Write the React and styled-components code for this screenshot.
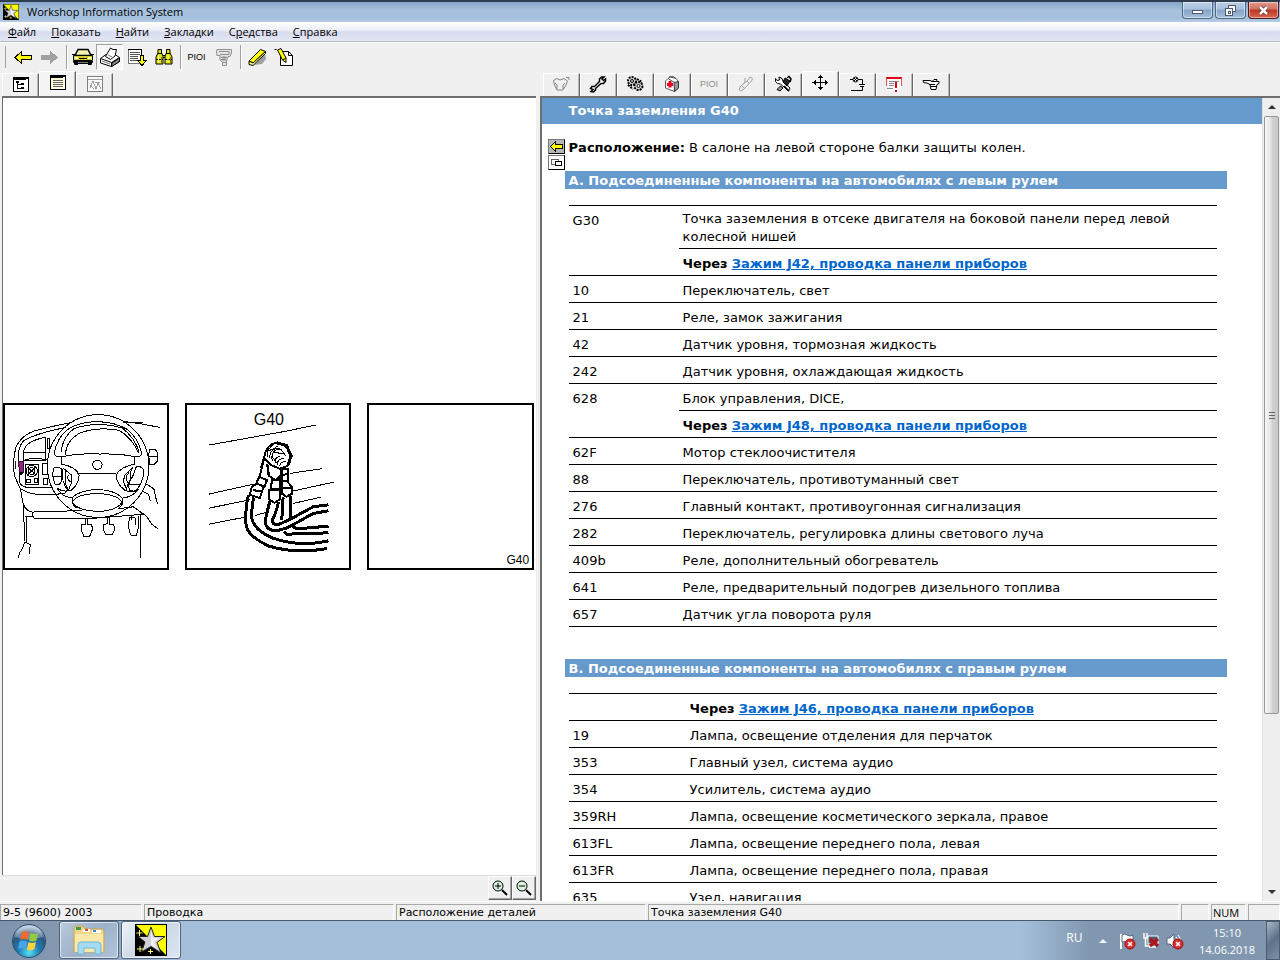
import React from "react";
import styled, { createGlobalStyle, css } from "styled-components";

const GlobalStyle = createGlobalStyle`
  * {
    box-sizing: border-box;
  }
  body {
    margin: 0;
    background: #f0f0f0;
    color: #000;
    font-family: "Open Sans", "Noto Sans", sans-serif;
    font-size: 12px;
  }
  button {
    font: inherit;
    color: inherit;
    padding: 0;
    margin: 0;
    border: 0;
    background: none;
  }
  svg {
    display: block;
  }
`;

const Desktop = styled.div`
  height: 100vh;
  display: flex;
  flex-direction: column;
  overflow: hidden;
`;

/* ---------- title bar ---------- */

const TitleBar = styled.header`
  height: 22px;
  flex: none;
  display: flex;
  align-items: center;
  padding: 0 1px 0 3px;
  border-top: 2px solid #2e3d50;
  background: linear-gradient(#88a6ca, #a9c2de 45%, #a4bfdd 80%, #b7cde6);
`;

const Title = styled.h1`
  flex: 1;
  margin: 0 0 0 8px;
  font-size: 11px;
  line-height: 18px;
  font-weight: 400;
`;

const WindowButtons = styled.div`
  display: flex;
  gap: 2px;
  align-self: flex-start;
`;

const WindowButton = styled.button`
  width: 31px;
  height: 17px;
  display: flex;
  align-items: center;
  justify-content: center;
  border: 1px solid ${(props) => (props.$danger ? "#4b1a1c" : "#4f6886")};
  border-top: 0;
  border-radius: 0 0 4px 4px;
  box-shadow: inset 0 0 0 1px rgba(255, 255, 255, 0.45);
  background: ${(props) =>
    props.$danger
      ? "linear-gradient(#e29a8c, #d2705f 45%, #bb3423 50%, #d8694f)"
      : "linear-gradient(#bccfe5, #a8c0dc 45%, #86a3c5 50%, #a5bfdc)"};
`;

/* ---------- menu + toolbar ---------- */

const MenuBar = styled.nav`
  height: 20px;
  flex: none;
  display: flex;
  align-items: center;
  gap: 15px;
  padding: 0 8px;
  background: linear-gradient(#fff, #eef0f8 40%, #d8dcee 55%, #e4e6f4);
  border-bottom: 1px solid #b4b6c2;
`;

const MenuItem = styled.button`
  font-size: 11px;
  line-height: 18px;
`;

const Toolbar = styled.div`
  height: 29px;
  flex: none;
  display: flex;
  align-items: center;
  padding-left: 4px;
  border-top: 1px solid #fff;
`;

const Grip = styled.span`
  width: 2px;
  height: 22px;
  margin-right: 3px;
  border-right: 1px solid #a0a0a0;
`;

const Divider = styled.span`
  width: 6px;
  height: 24px;
  flex: none;
  background: linear-gradient(90deg, transparent 3px, #a0a0a0 3px, #a0a0a0 4px, #fff 4px, #fff 5px, transparent 5px);
`;

const ToolButton = styled.button`
  width: 27px;
  height: 26px;
  display: flex;
  align-items: center;
  justify-content: center;
  border: 1px solid transparent;
  ${(props) =>
    props.$pressed &&
    css`
      border-color: #a0a0a0 #fff #fff #a0a0a0;
      background: #f7f7f7;
    `}
`;

const Code = styled.span`
  font-family: "Liberation Sans", sans-serif;
  font-size: 9px;
  line-height: 12px;
  color: ${(props) => (props.$off ? "#8c8c8c" : "#000")};
`;

/* ---------- panes ---------- */

const Workspace = styled.main`
  flex: 1;
  min-height: 0;
  display: flex;
`;

const Pane = styled.section`
  display: flex;
  flex-direction: column;
  min-width: 0;
  width: ${(props) => props.$width || "auto"};
  flex: ${(props) => (props.$width ? "none" : "1")};
  padding: ${(props) => (props.$width ? "0 2px" : "0 0 0 2px")};
`;

const Tabs = styled.div`
  height: 25px;
  flex: none;
  display: flex;
  align-items: flex-end;
  padding-left: ${(props) => props.$indent || 0}px;
`;

const Tab = styled.button`
  width: 37px;
  height: ${(props) => (props.$active ? 25 : 23)}px;
  padding-bottom: ${(props) => (props.$active ? 4 : 2)}px;
  display: flex;
  align-items: center;
  justify-content: center;
  background: ${(props) => (props.$active ? "#f4f4f4" : "#f0f0f0")};
  border-top: 1px solid #fff;
  border-left: 1px solid #fff;
  border-right: 1px solid #696969;
  box-shadow: inset -1px 0 #b8b8b8;
`;

const Panel = styled.div`
  flex: 1;
  min-height: 0;
  display: flex;
  background: #fff;
  border-top: 2px solid #6e6e6e;
  border-left: ${(props) => (props.$split ? 2 : 1)}px solid #6e6e6e;
`;

const Pictures = styled.div`
  flex: 1;
  display: grid;
  grid-template-columns: repeat(3, 1fr);
  gap: 16px;
  align-content: center;
  padding-right: 2px;
`;

const Picture = styled.figure`
  margin: 0;
  aspect-ratio: 1;
  border: 2px solid #000;
  background: #fff;
  svg {
    width: 100%;
    height: 100%;
  }
`;

const PaneFooter = styled.div`
  height: 26px;
  flex: none;
  display: flex;
  justify-content: flex-end;
  border-top: 1px solid #dcdcdc;
`;

const ZoomButton = styled.button`
  width: 24px;
  height: 24px;
  display: flex;
  align-items: center;
  justify-content: center;
  border: 1px solid #fff;
  border-right-color: #696969;
  border-bottom-color: #696969;
  box-shadow: inset -1px -1px #a0a0a0;
`;

/* ---------- document ---------- */

const Document = styled.article`
  flex: 1;
  overflow: hidden;
  font-family: "DejaVu Sans", Verdana, sans-serif;
  font-size: 13px;
  line-height: 18px;
`;

const DocTitle = styled.h2`
  margin: 0;
  padding: 4px 27px;
  font-size: 13px;
  line-height: 18px;
  color: #fff;
  background: #6699cc;
`;

const Location = styled.div`
  display: flex;
  gap: 4px;
  padding: 15px 6px 0;
  margin-bottom: 1px;
  p {
    margin: 0;
  }
`;

const SideButtons = styled.div`
  display: flex;
  flex-direction: column;
  gap: 1px;
`;

const SideButton = styled.button`
  width: 17px;
  height: 15px;
  background: ${(props) => (props.$filled ? "#b8b8b8" : "#fff")};
  border: 1px solid #000;
  border-left-color: #777;
  border-top-color: #777;
`;

const Section = styled.section`
  margin: 0 35px 32px 23px;
`;

const SectionTitle = styled.h3`
  margin: 0 0 16px;
  padding: 1px 4px 0;
  font-size: 13px;
  line-height: 17px;
  color: #fff;
  background: #6699cc;
`;

const PartsTable = styled.table`
  width: calc(100% - 14px);
  margin-left: 4px;
  border-collapse: separate;
  border-spacing: 0;
  border-bottom: ${(props) => (props.$open ? "0" : "1px solid #000")};
  th,
  td {
    padding: 6px 4px 2px;
    border-top: 1px solid #000;
    font-weight: 400;
    text-align: left;
    vertical-align: top;
  }
  th {
    width: ${(props) => props.$codeWidth}px;
  }
`;

const TallCell = styled.td`
  && {
    padding-top: 4px;
    padding-bottom: 2px;
  }
`;

const DocLink = styled.a`
  color: #0066cc;
  font-weight: 700;
  text-decoration: underline;
`;

const Scrollbar = styled.div`
  width: 18px;
  flex: none;
  display: flex;
  flex-direction: column;
  background: #eeeeee;
  border-left: 1px solid #e4e4e4;
`;

const ScrollArrow = styled.button`
  height: 18px;
  display: flex;
  align-items: center;
  justify-content: center;
`;

const ScrollTrack = styled.div`
  flex: 1;
`;

const Thumb = styled.div`
  height: 78%;
  margin: 0 1px;
  display: flex;
  align-items: center;
  justify-content: center;
  border: 1px solid #979797;
  border-radius: 2px;
  background: linear-gradient(90deg, #f6f6f6, #e4e4e4 45%, #d0d0d0 55%, #c8c8c8);
`;

/* ---------- status bar + taskbar ---------- */

const StatusBar = styled.footer`
  height: 19px;
  flex: none;
  display: grid;
  grid-template-columns: 142px 250px 250px 1fr 28px 35px 32px;
  gap: 2px;
  padding: 2px 0 1px;
  font-family: "DejaVu Sans", Tahoma, sans-serif;
  font-size: 11px;
  border-top: 1px solid #fff;
`;

const StatusCell = styled.span`
  padding-left: 2px;
  border: 1px solid #a8a8a8;
  border-right-color: #fff;
  border-bottom-color: #fff;
  white-space: nowrap;
  line-height: 15px;
`;

const Numlock = styled(StatusCell)`
  padding-left: 1px;
  font-family: "Open Sans", sans-serif;
`;

const Taskbar = styled.div`
  height: 40px;
  flex: none;
  display: flex;
  align-items: stretch;
  border-top: 1px solid #46586e;
  background: linear-gradient(90deg, #8093ac, #8598b0 60px, #a5bfdb 180px, #a5bfdb calc(100% - 260px), #8197b0 calc(100% - 190px));
`;

const StartButton = styled.button`
  width: 57px;
  display: flex;
  align-items: center;
  justify-content: center;
`;

const TaskButton = styled.button`
  width: 60px;
  margin: 0 0 1px 2px;
  display: flex;
  align-items: center;
  justify-content: center;
  border: 1px solid #4f637c;
  border-radius: 3px;
  box-shadow: inset 0 0 0 1px rgba(255, 255, 255, 0.6);
  background: ${(props) =>
    props.$active
      ? "linear-gradient(135deg, #eef2f8, #cbd7e6 50%, #dce6f1)"
      : "linear-gradient(135deg, #bccadb, #9db1ca 50%, #b0c4da)"};
`;

const Tray = styled.div`
  margin-left: auto;
  display: flex;
  align-items: center;
  color: #fff;
`;

const Language = styled.button`
  width: 17px;
  margin: 0 8px 5px 0;
  font-size: 12px;
  line-height: 16px;
`;

const TrayButton = styled.button`
  width: 24px;
  height: 24px;
  display: flex;
  align-items: center;
  justify-content: center;
`;

const Clock = styled.time`
  margin: 1px 11px 0 12px;
  text-align: center;
  font-size: 11px;
  line-height: 17px;
`;

const ShowDesktop = styled.button`
  width: 14px;
  align-self: stretch;
  border: 1px solid #4a5b70;
  background: linear-gradient(135deg, #a9b7c9, #5f7189 50%, #7d90a8);
`;

/* ---------- icons ---------- */

function Icon({ size = 24, children, smooth }) {
  return (
    <svg
      width={size}
      height={size}
      viewBox={`0 0 ${size} ${size}`}
      fill="none"
      stroke="#000"
      shapeRendering={smooth ? "auto" : "crispEdges"}
      aria-hidden="true"
    >
      {children}
    </svg>
  );
}

const StarLogo = ({ size }) => (
  <svg width={size} height={size} viewBox="0 0 32 32" aria-hidden="true">
    <path d="M0 0H32V32H0Z" fill="#000" />
    <path d="M1 1H31V31Z" fill="#ffff00" />
    <path
      d="M16 3L19.500 12.500H30L22 18.500L26 29L16 22.500L6.500 28L10 18L3 12.500H12.500Z"
      fill="#d0d0d6"
      stroke="#222"
    />
    <path d="M16 6L18 14H25L19 18L22 25L16 21Z" fill="#f2f2f6" />
    <path d="M4.500 6V12M1.500 9H7.500M5 22V28M2 25H8M15.500 25V30M13 27.500H18" stroke="#ffff66" fill="none" />
  </svg>
);

const BackIcon = () => (
  <Icon>
    <path d="M4 12.500L10.500 6.500V10.500H20.500V14.500H10.500V18.500Z" fill="#ffff00" />
  </Icon>
);

const ForwardIcon = () => (
  <Icon>
    <path d="M3 10H12V5.500L20 12.500L12 19V15H3Z" fill="#a0a0a0" stroke="none" />
  </Icon>
);

const CarIcon = () => (
  <Icon smooth>
    <path d="M7 4.500H17L20 10.500H4Z" fill="#f4f0b0" strokeWidth="1.500" />
    <path d="M2.500 10.500H21.500V15.500H2.500Z" fill="#d2ca30" />
    <path d="M2 16H22V17.500H2ZM2.500 17H7V20H3.500ZM17 17H21.500L20.500 20H17Z" fill="#000" stroke="none" />
    <path d="M1 9.500H4M20 9.500H23M7 18.500H17M8 13.500H16" />
    <path d="M3.500 12H7V14H3.500ZM17 12H20.500V14H17Z" fill="#ffffc0" stroke="none" />
  </Icon>
);

const PrinterIcon = () => (
  <Icon smooth>
    <path d="M2.500 13.500L8 9.500H17L21.500 12.500V16.500L13.500 21.500L2.500 18Z" fill="#fff" />
    <path d="M14 18L21.500 13V16.500L13.500 21.500Z" fill="#888" />
    <path d="M7.500 11.500L12.500 3L15 4.500L18.500 4.500L17 11L12.500 14.500Z" fill="#fff" />
    <path d="M2.500 13.500L13.500 17.500L21.500 12.500M13.500 17.500V21" />
    <path d="M4 16L12 19M10 10L14 12" stroke="#777" />
  </Icon>
);

const ListDownIcon = () => (
  <Icon>
    <path d="M3.500 4.500H16.500V18.500H3.500Z" fill="#fff" stroke="#777" />
    <path d="M5 7.500H15M5 9.500H15M5 11.500H13M5 13.500H13M5 15.500H12" stroke="#555" />
    <path d="M3 4.500H17M16.500 4V10" />
    <path d="M15.500 10.500H18.500V15.500H21.500L17 20.500L12.500 15.500H15.500Z" fill="#ffff00" />
  </Icon>
);

const BinocularsIcon = () => (
  <Icon smooth>
    <path d="M6 4.500H9.500V8L11 11V19H4V12L6 8Z" fill="#e6e200" />
    <path d="M14.500 4.500H18V8L20 12V19H13V11L14.500 8Z" fill="#e6e200" />
    <path d="M11 10.500H13M11 12.500H13M4 14.500H11M13 14.500H20M6 8.500H10M14 8.500H18" />
    <path d="M6.500 10V18M16 10V18" stroke="#ffffa0" />
    <path d="M9.500 12V18M18.500 12V18" stroke="#808000" />
  </Icon>
);

const ConnectorIcon = () => (
  <Icon smooth>
    <path
      d="M5 4.500H19.500V8L18 11.500H16L14.500 16V20.500H10.500V17L8 15V10.500H5L4.500 7Z"
      stroke="#909090"
      fill="#e4e4e4"
    />
    <path d="M7 6.500H17V9.500H8M9 12.500H15M9 14.500H14M11 17.500H14M11 11V16M13 11V16" stroke="#909090" />
  </Icon>
);

const MarkerIcon = () => (
  <Icon smooth>
    <path d="M9 20L20 8L21 14L17 19Z" fill="#a0a0a0" stroke="none" />
    <path d="M4 16L15.500 4.500L20.500 6.500L8 18Z" fill="#ffff00" />
    <path d="M4 16V19.500L8 20.500L20.500 8.500V6.500L8 18Z" fill="#ffff80" />
  </Icon>
);

const NoteIcon = () => (
  <Icon smooth>
    <path d="M8.500 6.500H16.500L20.500 10.500V20.500H8.500Z" fill="#fff" />
    <path d="M16.500 6.500V10.500H20.500" />
    <path d="M5.500 5L9 3.500L14 13V17.500L10.500 15Z" fill="#ffff00" />
    <path d="M2.500 4.500H4.500M10.500 15L14 13" />
  </Icon>
);

const TreeIcon = () => (
  <Icon>
    <path d="M4.500 5.500H19.500V19.500H4.500Z" fill="#fff" />
    <path d="M4 6.500H20M4 7.500H17M8.500 10V16.500H12M8.500 12.500H12" />
    <path d="M7 9H10V11H7ZM12 11H15V13H12ZM12 15H15V17H12Z" fill="#000" stroke="none" />
  </Icon>
);

const TextPageIcon = () => (
  <Icon>
    <path d="M4.500 5.500H19.500V19.500H4.500Z" fill="#ffffe0" />
    <path d="M4 6.500H20" />
    <path d="M4 7.500H17" />
    <path d="M7 10.500H17M7 12.500H17M7 14.500H17M7 16.500H17" stroke="#666" />
  </Icon>
);

const SketchIcon = () => (
  <Icon>
    <path d="M4.500 4.500H19.500V19.500H4.500Z" fill="#f8f8f8" stroke="#808080" />
    <path d="M5 7.500H19M7 16L10 9L13 17L15 11L18 17M7 13L11 17M12 10H17" stroke="#a0a0a0" />
  </Icon>
);

const EngineIcon = () => (
  <Icon smooth>
    <path
      d="M4.500 8.500L8 6.500L11 8L15 6.500L18.500 9L17 13L14 18H8L5.500 13ZM6 11L8 13V17M16 11L14 13V17M17 5.500H20V8"
      stroke="#858585"
    />
  </Icon>
);

const WrenchIcon = () => (
  <Icon smooth>
    <path
      d="M4.500 16.500L6 14.500H8.500L13.500 9.500V7L15.500 5H18L16 7L17.500 8.500L19.500 7V9L17.500 11.500H15L9.500 16.500V18L7.500 20L5 19.500L7 17.500Z"
      fill="#fff"
      strokeWidth="1.500"
    />
  </Icon>
);

const GearsIcon = () => (
  <Icon smooth>
    <circle cx="9" cy="9" r="4" fill="#ddd" strokeWidth="2" strokeDasharray="2 1" />
    <circle cx="9" cy="9" r="1.500" />
    <circle cx="15.500" cy="14" r="4" fill="#ddd" strokeWidth="2" strokeDasharray="2 1" />
    <circle cx="15.500" cy="14" r="1.500" fill="#fff" />
    <path d="M5 13L10 17M14 7L19 10" strokeDasharray="2 1" strokeWidth="2" />
  </Icon>
);

const FirstAidIcon = () => (
  <Icon smooth>
    <path d="M5.500 9L8 6.500L10 5L16 6.500L18.500 9.500V16L14.500 19.500L5.500 16Z" fill="#fff" stroke="#555" />
    <path d="M14 10.500L18.500 9.500V16L14.500 19.500Z" fill="#999" stroke="#333" />
    <path d="M8 6.500L14.500 10.500M9 5L13 4.500L16 6.500" stroke="#555" />
    <path d="M10 9V15.500M7 12.500H13" stroke="#e8001c" strokeWidth="3" />
  </Icon>
);

const ProbeIcon = () => (
  <Icon smooth>
    <path
      d="M6 15L14 8L16 5L18.500 6.500L17.500 9L10 17L7 19L5.500 18ZM8 14L10 16M13 9L15 11M11 6V10L9 12"
      stroke="#a0a0a0"
    />
  </Icon>
);

const ToolsIcon = () => (
  <Icon smooth>
    <path d="M4.500 6.500L6 8.500L8.500 8L8 5L11 6.500L12 9.500L19 16L17.500 19L9.500 12L6.500 11.500L4.500 9.500Z" fill="#fff" />
    <path d="M6 17.500L9.500 14L12 16L9 19Z" fill="#999" />
    <path d="M14 6L19 9L16 14L12 10Z" fill="#222" />
    <path d="M16 6L18 4.500L20 7L19 10M13 14L18 19" strokeWidth="1.500" />
  </Icon>
);

const MoveIcon = () => (
  <Icon>
    <path d="M12.500 5V20M5 12.500H20" />
    <path d="M12.500 4.500L10 8H15ZM12.500 20.500L10 17H15ZM4.500 12.500L8 10V15ZM20.500 12.500L17 10V15Z" fill="#000" stroke="none" />
  </Icon>
);

const CircuitIcon = () => (
  <Icon smooth>
    <circle cx="10.500" cy="7.500" r="2.500" />
    <path d="M5 7.500H8M13 7.500H17.500V12M14 12.500H20M15 14.500H19M17.500 15V18.500H6M9 6L12 9M12 6L9 9" />
  </Icon>
);

const AlertIcon = () => (
  <Icon>
    <path d="M5.500 6.500H19.500V14.500L17 18.500H7L5.500 14.500Z" fill="#fff" stroke="none" />
    <path d="M4 6H20" stroke="#e00018" strokeWidth="2" />
    <path d="M4.500 6V14M19.500 6V14" stroke="#e05060" />
    <path d="M7 9.500H17M7 11.500H12M7 13.500H12M5 16.500H11" stroke="#888" />
    <path d="M14 10V16M14 18V20" stroke="#e00018" strokeWidth="2" />
  </Icon>
);

const HandIcon = () => (
  <Icon smooth>
    <path d="M4 8.500H11L13 9.500L15 7.500H18L17.500 9.500H20V11.500L18 12.500L17 17.500H12L11 12.500L8 11L4.500 10.500Z" fill="#fff" />
    <path d="M11 12.500H16M12 14.500H17M13 9.500H17.500" />
  </Icon>
);

const ZoomIcon = ({ plus }) => (
  <Icon size={20} smooth>
    <circle cx="8" cy="8" r="5" fill="#d8f5dc" />
    <path d="M12 12L17 17" strokeWidth="2" />
    <path d={plus ? "M5 8H11M8 5V11" : "M5 8H11"} />
  </Icon>
);

const Triangle = ({ up, light }) => (
  <svg width="8" height="6" viewBox="0 0 8 6" aria-hidden="true">
    <path d={up ? "M4 1L8 5H0Z" : "M4 5L8 1H0Z"} fill={light ? "#f2f6fa" : "#333"} />
  </svg>
);

const StartOrb = () => (
  <svg width="36" height="36" viewBox="0 0 36 36" aria-hidden="true">
    <defs>
      <radialGradient id="orb" cx="50%" cy="85%" r="80%">
        <stop offset="0" stopColor="#58e0f5" />
        <stop offset="0.400" stopColor="#1f7db4" />
        <stop offset="0.750" stopColor="#2c5680" />
        <stop offset="1" stopColor="#b7cbdc" />
      </radialGradient>
    </defs>
    <circle cx="18" cy="18" r="16.500" fill="url(#orb)" stroke="#314f6d" />
    <path d="M4 14Q7 3 18 3Q29 3 32 14Q18 18 4 14Z" fill="#fff" opacity="0.300" />
    <path d="M11 9Q14 7.500 18 9.500L16.500 17Q13 15 9 17Z" fill="#ee6a2f" />
    <path d="M19.500 10Q23 12 27 10L25.500 17.500Q22 19.500 18 17.500Z" fill="#97c93d" />
    <path d="M8.500 18.500Q12 16.500 16 18.500L14.500 26Q11 24 7 26Z" fill="#4aa3e8" />
    <path d="M17.500 19Q21 21 25 19L23.500 26Q20 28.500 16 26.500Z" fill="#ffd13a" />
  </svg>
);

const FolderIcon = () => (
  <svg width="34" height="32" viewBox="0 0 34 32" aria-hidden="true">
    <path d="M2 5Q2 2 5 2H11L13 5H30Q32 5 32 8V28H2Z" fill="#f0d68a" stroke="#c9a54e" />
    <path d="M4 3H9V6H4Z" fill="#3d9e4a" />
    <path d="M11 5H18V8H11Z" fill="#fff" />
    <path d="M13 5H16V7H13Z" fill="#d64b32" />
    <path d="M20 6H29V9H20Z" fill="#fff" />
    <path d="M21 6H24V8H21Z" fill="#3f8fd2" />
    <path d="M3 10H31V28H3Z" fill="#fbe9ac" />
    <path d="M6 30V21Q6 18 9 18H26Q29 18 29 21V30H23V24H12V30Z" fill="#a5daf3" stroke="#6fb6da" />
  </svg>
);

const Cross = () => (
  <>
    <circle cx="13" cy="13" r="5" fill="#d92b2b" stroke="#a01414" />
    <path d="M11 11L15 15M15 11L11 15" stroke="#fff" strokeWidth="1.500" />
  </>
);

const FlagIcon = () => (
  <Icon size={20} smooth>
    <path d="M4 3V18" stroke="#fff" strokeWidth="2" />
    <path d="M5 4Q8 2 10 4Q13 6 16 4V11Q12 13 10 11Q8 10 5 11Z" fill="#fff" stroke="#56677c" />
    <Cross />
  </Icon>
);

const NetworkIcon = () => (
  <Icon size={20} smooth>
    <path d="M7 5H17V13H7Z" fill="#4b5a6b" stroke="#fff" />
    <path d="M3 2V7H6V2M4.500 7V15H9M8 16H15" stroke="#fff" strokeWidth="1.500" />
    <path d="M9 8L17 15M17 8L9 15" stroke="#b31217" strokeWidth="3" />
  </Icon>
);

const SpeakerIcon = () => (
  <Icon size={20} smooth>
    <path d="M2 7H5L9 3V17L5 13H2Z" fill="#fff" stroke="#56677c" />
    <path d="M11 6Q13 8 12 10M13 4Q16 7 15 10" stroke="#fff" />
    <Cross />
  </Icon>
);

/* ---------- drawings ---------- */

const DashboardDrawing = () => (
  <svg viewBox="16 31 486 486" fill="none" stroke="#000" strokeWidth="3" shapeRendering="crispEdges" role="img" aria-label="G40">
    <ellipse cx="295" cy="214" rx="152" ry="154" />
    <path d="M163 178Q172 126 207 102Q245 80 296 81Q345 82 384 105Q415 130 426 178" />
    <path d="M163 178Q170 188 184 186Q240 174 300 178Q360 176 406 186Q420 188 426 178" />
    <path d="M184 172Q188 128 222 102Q290 78 368 100Q405 130 418 172" />
    <path d="M198 180Q196 142 240 115Q295 95 358 107Q398 130 416 176" />
    <circle cx="293" cy="210" r="14" />
    <path d="M184 186V208Q230 216 238 242Q236 270 215 286Q190 294 172 280" />
    <path d="M404 186V208Q358 218 349 242Q352 270 375 286Q395 296 412 284" />
    <path d="M238 236H349M172 280Q190 310 218 308Q240 286 294 284Q345 286 368 310Q400 306 416 284" />
    <path d="M218 324Q224 298 294 296Q360 300 366 324Q350 348 294 350Q232 346 218 324Z" />
    <path d="M218 308Q214 330 232 340M368 310Q374 330 354 342" />
    <path d="M163 220Q178 214 184 222V262Q178 274 166 268Q154 244 163 220ZM160 246H184" />
    <path d="M190 220L214 240L216 262L206 286M196 226V262L204 284M190 222Q182 262 206 288M208 240Q198 250 212 262" />
    <path d="M400 218L376 240L370 260L382 286M394 226L390 262L380 280M388 232Q372 250 386 266" />
    <path d="M408 218Q420 210 430 224Q434 250 418 274L408 292L390 286L384 268Q402 244 408 218ZM386 268H420" />
    <path d="M144 196Q100 186 72 197M136 174H72V170Q76 140 136 128V174M72 176V197H136V176" />
    <path d="M45 245Q36 200 50 154Q68 122 100 110Q150 96 212 84" />
    <path d="M58 200Q52 160 70 140Q100 118 200 98" />
    <path d="M45 245L62 282Q110 312 200 294M62 212L60 262Q64 278 90 278H160" />
    <path d="M142 132H149V160H142ZM76 208H116V270H76ZM128 206H142V240H128ZM130 250H142V268H130ZM80 254H92V262H80ZM104 250H112V262H104Z" />
    <circle cx="96" cy="229" r="17" />
    <circle cx="96" cy="229" r="10" />
    <path d="M84 218L108 240M84 240L106 218" />
    <path d="M62 282L70 326Q78 350 98 352L128 349Q180 354 218 346H246M98 352V364L106 372H260L340 366L410 360H430L408 340" />
    <path d="M76 366H102M70 326L76 440M80 366V444H74Q72 460 60 474L55 488M80 444L92 450L88 478" />
    <path d="M258 370V390H246L244 404L252 424H270L278 404L276 390H264V370" />
    <path d="M324 368V386L312 390L310 402L318 420H338L344 404L342 390H330V368" />
    <path d="M390 368L386 384L388 408L394 422H410L416 396V364M390 368L408 370V392M422 358V490M396 360V376" />
    <path d="M370 80L420 87L480 98M430 82H370M450 164H466L472 172V200L464 208H450L446 180ZM448 184H472" />
    <path d="M440 268L462 282L468 310L474 328M430 290L446 298L452 320M354 342L400 336L440 364L456 388L474 402" />
    <path d="M47 200V222" stroke="#112233" strokeWidth="5" />
    <path d="M56 200H70V232H60Z" fill="#8a2a78" stroke="#400b38" />
    <path d="M60 234L68 238" strokeWidth="8" />
  </svg>
);

const GroundPointDrawing = () => (
  <svg viewBox="22 31 486 486" fill="none" stroke="#000" strokeWidth="3" shapeRendering="crispEdges" role="img" aria-label="G40">
    <text x="222" y="92" fontSize="48" fontFamily="Liberation Sans, sans-serif" fill="#000" stroke="none">
      G40
    </text>
    <path d="M88 151L316 110M88 298L222 268M88 340L212 315M88 388L196 367M330 236L426 222M334 290L462 262M340 326L424 307M226 362L262 352M316 110L408 91" />
    <path d="M244 220L254 184Q260 150 290 144Q318 146 332 178Q336 206 318 216L300 222L276 212L254 190" strokeWidth="6" fill="#fff" />
    <path d="M290 144L320 152L334 184L324 212" strokeWidth="9" />
    <path d="M262 186Q260 164 280 152M270 190Q268 168 294 154M278 198Q272 180 286 166L304 164L318 184M286 204Q284 190 300 184M292 210Q292 194 312 190M300 214Q300 200 320 200M276 184L292 206M262 168L300 160M284 172L310 178" />
    <path d="M254 186L246 220L238 252M262 208L268 244L288 256L302 244L304 222" strokeWidth="6" />
    <path d="M266 210L262 240" />
    <path d="M238 246L262 256L254 276L230 266ZM230 266L252 276L240 310L210 300L216 278ZM220 286L244 290" strokeWidth="6" />
    <path d="M276 256L302 254L300 284L274 282ZM268 286L300 286L300 314L284 324L268 314Z" strokeWidth="6" />
    <path d="M304 222H324V262L338 278V296L320 306L304 294V222M304 258H324M306 278L336 280M310 240L322 238" strokeWidth="6" />
    <path d="M306 222V300" strokeWidth="9" />
    <path d="M206 302Q196 336 199 392Q206 426 268 454Q350 478 442 461" strokeWidth="9" />
    <path d="M222 308Q214 340 217 374Q226 408 280 430Q360 458 446 438" strokeWidth="9" />
    <path d="M270 320Q262 350 256 378Q258 408 290 408L320 400L350 384L400 356L446 348" strokeWidth="9" />
    <path d="M296 322Q290 350 278 376Q278 390 294 390L330 374L400 336L446 330" strokeWidth="9" />
    <path d="M310 308L306 376M332 304V370M338 396L352 402L446 394M312 410L322 418L446 414" strokeWidth="9" />
  </svg>
);

const BlankDrawing = () => (
  <svg viewBox="0 0 162 162" role="img" aria-label="G40">
    <text x="160" y="159" textAnchor="end" fontSize="12" fontFamily="Liberation Sans, sans-serif">
      G40
    </text>
  </svg>
);

/* ---------- data ---------- */

const MENU = [
  ["", "Ф", "айл"],
  ["", "П", "оказать"],
  ["", "Н", "айти"],
  ["", "З", "акладки"],
  ["С", "р", "едства"],
  ["", "С", "правка"],
];

const DOC_TABS = [
  { name: "Двигатель", icon: <EngineIcon /> },
  { name: "Ремонт", icon: <WrenchIcon /> },
  { name: "Трансмиссия", icon: <GearsIcon /> },
  { name: "Диагностика", icon: <FirstAidIcon /> },
  { name: "Коды", icon: <Code $off>PIOI</Code> },
  { name: "Измерения", icon: <ProbeIcon /> },
  { name: "Инструменты", icon: <ToolsIcon /> },
  { name: "Расположение", icon: <MoveIcon />, active: true },
  { name: "Схема", icon: <CircuitIcon /> },
  { name: "Бюллетени", icon: <AlertIcon /> },
  { name: "Указания", icon: <HandIcon /> },
];

// a row without a code continues the previous one, "via" is a link to a clamp
const LEFT_HAND = [
  {
    code: "G30",
    text: "Точка заземления в отсеке двигателя на боковой панели перед левой колесной нишей",
    span: 2,
    tall: true,
  },
  { via: "Зажим J42, проводка панели приборов" },
  { code: "10", text: "Переключатель, свет" },
  { code: "21", text: "Реле, замок зажигания" },
  { code: "42", text: "Датчик уровня, тормозная жидкость" },
  { code: "242", text: "Датчик уровня, охлаждающая жидкость" },
  { code: "628", text: "Блок управления, DICE,", span: 2 },
  { via: "Зажим J48, проводка панели приборов" },
  { code: "62F", text: "Мотор стеклоочистителя" },
  { code: "88", text: "Переключатель, противотуманный свет" },
  { code: "276", text: "Главный контакт, противоугонная сигнализация" },
  { code: "282", text: "Переключатель, регулировка длины светового луча" },
  { code: "409b", text: "Реле, дополнительный обогреватель" },
  { code: "641", text: "Реле, предварительный подогрев дизельного топлива" },
  { code: "657", text: "Датчик угла поворота руля" },
];

const RIGHT_HAND = [
  { code: "", via: "Зажим J46, проводка панели приборов" },
  { code: "19", text: "Лампа, освещение отделения для перчаток" },
  { code: "353", text: "Главный узел, система аудио" },
  { code: "354", text: "Усилитель, система аудио" },
  { code: "359RH", text: "Лампа, освещение косметического зеркала, правое" },
  { code: "613FL", text: "Лампа, освещение переднего пола, левая" },
  { code: "613FR", text: "Лампа, освещение переднего пола, правая" },
  { code: "635", text: "Узел, навигация" },
];

function Parts({ rows, codeWidth, open }) {
  return (
    <PartsTable $codeWidth={codeWidth} $open={open}>
      <tbody>
        {rows.map((row, i) => {
          const Cell = row.tall ? TallCell : "td";
          return (
            <tr key={i}>
              {row.code !== undefined && (
                <th scope="row" rowSpan={row.span || 1}>
                  {row.code}
                </th>
              )}
              <Cell>
                {row.via ? (
                  <>
                    <b>Через</b> <DocLink href="#">{row.via}</DocLink>
                  </>
                ) : (
                  row.text
                )}
              </Cell>
            </tr>
          );
        })}
      </tbody>
    </PartsTable>
  );
}

function App() {
  return (
    <Desktop>
      <GlobalStyle />
      <TitleBar>
        <StarLogo size={16} />
        <Title>Workshop Information System</Title>
        <WindowButtons>
          <WindowButton aria-label="Свернуть">
            <Icon size={13}>
              <path d="M1.500 6.500H11.500V9.500H1.500Z" fill="#fff" stroke="#4a5a70" />
            </Icon>
          </WindowButton>
          <WindowButton aria-label="Восстановить">
            <Icon size={13}>
              <path d="M4.500 1.500H11.500V7.500H4.500Z" fill="#fff" stroke="#4a5a70" />
              <path d="M1.500 4.500H8.500V11.500H1.500Z" fill="#fff" stroke="#4a5a70" />
              <path d="M4 7H6V9H4Z" stroke="#4a5a70" />
            </Icon>
          </WindowButton>
          <WindowButton $danger aria-label="Закрыть">
            <Icon size={13} smooth>
              <path d="M3 3L10 10M10 3L3 10" stroke="#5a3036" strokeWidth="4" />
              <path d="M3 3L10 10M10 3L3 10" stroke="#fff" strokeWidth="2.500" />
            </Icon>
          </WindowButton>
        </WindowButtons>
      </TitleBar>

      <MenuBar>
        {MENU.map(([before, key, after]) => (
          <MenuItem key={key + after}>
            {before}
            <u>{key}</u>
            {after}
          </MenuItem>
        ))}
      </MenuBar>

      <Toolbar>
        <Grip />
        <ToolButton aria-label="Назад"><BackIcon /></ToolButton>
        <ToolButton aria-label="Вперед"><ForwardIcon /></ToolButton>
        <Divider />
        <ToolButton aria-label="Автомобиль"><CarIcon /></ToolButton>
        <ToolButton aria-label="Печать" $pressed><PrinterIcon /></ToolButton>
        <ToolButton aria-label="Список"><ListDownIcon /></ToolButton>
        <ToolButton aria-label="Найти"><BinocularsIcon /></ToolButton>
        <Divider />
        <ToolButton><Code>PIOI</Code></ToolButton>
        <ToolButton aria-label="Разъем"><ConnectorIcon /></ToolButton>
        <Divider />
        <ToolButton aria-label="Закладка"><MarkerIcon /></ToolButton>
        <ToolButton aria-label="Заметка"><NoteIcon /></ToolButton>
      </Toolbar>

      <Workspace>
        <Pane $width="42%">
          <Tabs>
            <Tab aria-label="Дерево"><TreeIcon /></Tab>
            <Tab aria-label="Текст" $active><TextPageIcon /></Tab>
            <Tab aria-label="Рисунок"><SketchIcon /></Tab>
          </Tabs>
          <Panel>
            <Pictures>
              <Picture><DashboardDrawing /></Picture>
              <Picture><GroundPointDrawing /></Picture>
              <Picture><BlankDrawing /></Picture>
            </Pictures>
          </Panel>
          <PaneFooter>
            <ZoomButton aria-label="Увеличить"><ZoomIcon plus /></ZoomButton>
            <ZoomButton aria-label="Уменьшить"><ZoomIcon /></ZoomButton>
          </PaneFooter>
        </Pane>

        <Pane>
          <Tabs $indent={3}>
            {DOC_TABS.map((tab) => (
              <Tab key={tab.name} aria-label={tab.name} $active={tab.active}>
                {tab.icon}
              </Tab>
            ))}
          </Tabs>
          <Panel $split>
            <Document>
              <DocTitle>Точка заземления G40</DocTitle>
              <Location>
                <SideButtons>
                  <SideButton $filled aria-label="Назад">
                    <svg width="15" height="13" fill="#ffff00" stroke="#000" shapeRendering="crispEdges">
                      <path d="M1.500 6.500L6.500 1.500V4.500H13.500V8.500H6.500V11.500Z" />
                    </svg>
                  </SideButton>
                  <SideButton aria-label="Окна">
                    <svg width="15" height="13" fill="#fff" stroke="#000" shapeRendering="crispEdges">
                      <path d="M2.500 3.500H9.500V8.500H2.500Z" stroke="#666" />
                      <path d="M6.500 5.500H12.500V9.500H6.500Z" />
                    </svg>
                  </SideButton>
                </SideButtons>
                <p>
                  <b>Расположение:</b> В салоне на левой стороне балки защиты колен.
                </p>
              </Location>
              <Section>
                <SectionTitle>A. Подсоединенные компоненты на автомобилях с левым рулем</SectionTitle>
                <Parts rows={LEFT_HAND} codeWidth={110} />
              </Section>
              <Section>
                <SectionTitle>B. Подсоединенные компоненты на автомобилях с правым рулем</SectionTitle>
                <Parts rows={RIGHT_HAND} codeWidth={117} open />
              </Section>
            </Document>
            <Scrollbar>
              <ScrollArrow aria-label="Вверх"><Triangle up /></ScrollArrow>
              <ScrollTrack>
                <Thumb>
                  <svg width="8" height="8" stroke="#666" shapeRendering="crispEdges">
                    <path d="M1 1.500H7M1 4.500H7M1 7.500H7" />
                  </svg>
                </Thumb>
              </ScrollTrack>
              <ScrollArrow aria-label="Вниз"><Triangle /></ScrollArrow>
            </Scrollbar>
          </Panel>
        </Pane>
      </Workspace>

      <StatusBar>
        <StatusCell>9-5 (9600) 2003</StatusCell>
        <StatusCell>Проводка</StatusCell>
        <StatusCell>Расположение деталей</StatusCell>
        <StatusCell>Точка заземления G40</StatusCell>
        <StatusCell />
        <Numlock>NUM</Numlock>
        <StatusCell />
      </StatusBar>

      <Taskbar>
        <StartButton aria-label="Пуск"><StartOrb /></StartButton>
        <TaskButton aria-label="Проводник"><FolderIcon /></TaskButton>
        <TaskButton $active aria-label="Workshop Information System">
          <StarLogo size={32} />
        </TaskButton>
        <Tray>
          <Language>RU</Language>
          <TrayButton aria-label="Показать значки"><Triangle up light /></TrayButton>
          <TrayButton aria-label="Центр поддержки"><FlagIcon /></TrayButton>
          <TrayButton aria-label="Сеть"><NetworkIcon /></TrayButton>
          <TrayButton aria-label="Громкость"><SpeakerIcon /></TrayButton>
          <Clock>
            15:10
            <br />
            14.06.2018
          </Clock>
          <ShowDesktop aria-label="Свернуть все окна" />
        </Tray>
      </Taskbar>
    </Desktop>
  );
}

export default App;
